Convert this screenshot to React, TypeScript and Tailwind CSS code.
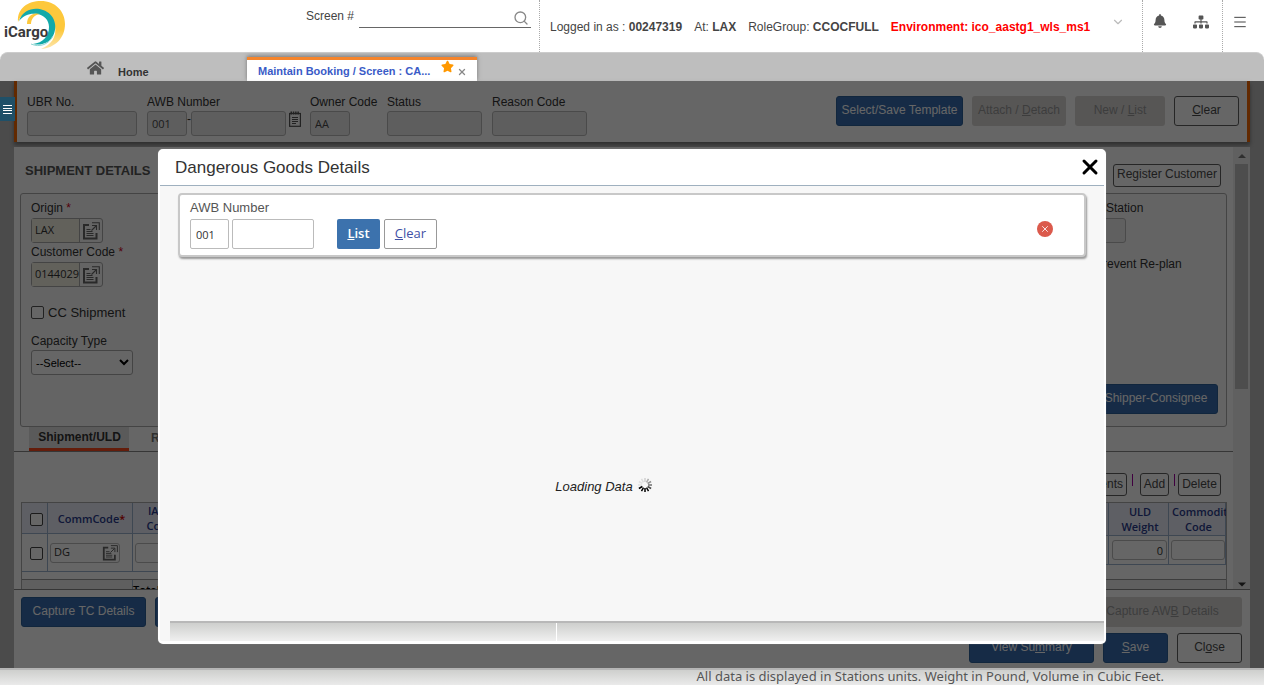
import React from "react";
import { FaBell, FaHome, FaSitemap, FaStar } from "react-icons/fa";
import { ChevronDown, Menu, Search, X } from "lucide-react";

const field = "block h-[25px] rounded-[3px] border border-[#bababa] px-1 font-['Open_Sans',sans-serif] text-[11px] text-[#4a4a4a]";
const outlined = "rounded-[3px] border border-[#606060] pb-[2px] text-xs text-[#4a4a4a]";
const primary = "h-[30px] rounded-[3px] border border-[#2c5f98] bg-[#376cae] pb-[2px] text-xs text-white";
const disabled = "h-[30px] rounded-[3px] bg-[#d9d7d5] pb-[2px] text-xs text-[#9a9a9a]";

function LookupIcon({ className }: { className: string }) {
  return (
    <svg viewBox="0 0 18 18" className={className} fill="none" stroke="#666" aria-hidden="true">
      <path d="M7 3H2v13.500h12.500V11" strokeWidth="2" />
      <path d="M4.500 7.500h4M4.500 9.500h6M4.500 11.500h7M4.500 13.500h7" strokeWidth="1" />
      <path d="M9.500 8.500 14 4M10 3.500h4.500V8M10 .7h7.300V8" strokeWidth="1.100" />
    </svg>
  );
}

function NotepadIcon() {
  return (
    <svg viewBox="0 0 12 16" className="h-4 w-3" fill="none" stroke="#555" aria-hidden="true">
      <rect x=".6" y="2.500" width="10.800" height="12.800" strokeWidth="1.200" />
      <path d="M1.500 2h9" strokeWidth="3" strokeDasharray="1.500 .8" />
      <path d="M3 6.500h6M3 8.500h6M3 10.500h6M3 12.500h4" />
    </svg>
  );
}

function Logo() {
  return (
    <svg viewBox="0 0 66 52" className="h-[52px] w-[66px]" role="img" aria-label="iCargo">
      <defs>
        <linearGradient id="sun" x1="0" y1="0" x2="0" y2="1">
          <stop offset=".6" stopColor="#fdc83c" />
          <stop offset="1" stopColor="#fde6ae" />
        </linearGradient>
      </defs>
      <path d="M18 22C17 8 28 1 41 1c14 0 24 10 24 23 0 14-10 24-24 25 10-4 16-12 14-23C53 14 40 8 28 12c-5 2-8 5-10 10Z" fill="url(#sun)" />
      <path d="M19 21C23 9 35 7 43 10c12 4 15 17 10 26-4 7-12 10-20 8 10-1 16-8 16-17 0-7-5-12-12-13-7-1-13 1-18 7Z" fill="#12a9a9" />
      <path d="M27 24c0-8 6-12 13-10-6 1-9 5-9 10Z" fill="#fdc83c" />
      <path d="M31 44c9 4 18 0 22-8" fill="none" stroke="#8fd6d3" strokeWidth="1" />
      <text x="4" y="37" fontFamily="Roboto, Liberation Sans, sans-serif" fontSize="15" fontWeight="700" fill="#39393b">iCargo</text>
    </svg>
  );
}

function TopBar() {
  return (
    <header className="flex h-[52px] bg-white text-xs text-[#444]">
      <div className="w-[306px] shrink-0"><Logo /></div>
      <div className="flex w-[234px] shrink-0 items-start gap-[5px] border-r border-dotted border-[#aaa] pt-2">
        <label htmlFor="screen" className="leading-4">Screen #</label>
        <div className="flex h-5 w-[172px] items-center border-b border-[#666]">
          <input id="screen" className="w-full min-w-0 outline-none" />
          <Search className="mr-[2px] h-4 w-4 shrink-0 text-[#888]" strokeWidth={2} />
        </div>
      </div>
      <div className="flex grow gap-3 whitespace-nowrap pt-[19px] pl-[10px] leading-4">
        <span>Logged in as : <b>00247319</b></span>
        <span>At: <b>LAX</b></span>
        <span>RoleGroup: <b>CCOCFULL</b></span>
        <b className="text-[#f00]">Environment: ico_aastg1_wls_ms1</b>
      </div>
      <button aria-label="More" className="mr-[17px] h-11 shrink-0"><ChevronDown className="h-[14px] w-[14px] text-[#bbb]" /></button>
      <div className="flex w-[81px] shrink-0 items-start justify-between border-x border-dotted border-[#aaa] pt-[14px] pr-[13px] pl-[10px]">
        <button aria-label="Notifications"><FaBell className="h-[14px] w-[14px] text-[#555]" /></button>
        <button aria-label="Site map"><FaSitemap className="h-4 w-4 text-[#555]" /></button>
      </div>
      <button aria-label="Menu" className="flex w-[41px] shrink-0 items-start justify-center pt-[14px] pr-2"><Menu className="h-4 w-4 text-[#444]" strokeWidth={1.5} /></button>
    </header>
  );
}

function TabBar() {
  return (
    <nav className="flex h-[29px] items-end rounded-t-lg border-t border-[#ccc] bg-[#bebebe] text-[11px] font-bold">
      <a href="#home" className="ml-[87px] flex h-[21px] w-[160px] items-start gap-[14px] text-[#333]">
        <FaHome className="h-4 w-[17px] text-[#555]" />
        <span className="pt-1 leading-4">Home</span>
      </a>
      <div className="flex h-[24px] w-[230px] justify-between border-t-[3px] border-[#f5842b] bg-white pr-[10px] pl-[11px] shadow-[0_-1px_4px_#777]">
        <a href="#booking" className="pt-[3px] leading-4 whitespace-nowrap text-[#3a5bc7]">Maintain Booking / Screen : CA...</a>
        <span className="flex items-start gap-[3px]">
          <FaStar className="h-[13px] w-[13px] shrink-0 text-[#ff9800]" />
          <button aria-label="Close tab" className="pt-[7px]"><X className="h-[10px] w-[10px] text-[#888]" strokeWidth={3} /></button>
        </span>
      </div>
    </nav>
  );
}

function Field({ id, label, width, value }: { id: string; label: string; width: string; value?: string }) {
  return (
    <div className={width}>
      <label htmlFor={id} className="mb-px block leading-4 whitespace-nowrap">{label}</label>
      <input id={id} defaultValue={value} className={field + " w-full bg-[#ececec]"} />
    </div>
  );
}

function FilterPanel() {
  return (
    <section className="mb-[5px] flex h-[61px] items-start border-x-[3px] border-[#f56600] bg-white pr-2 pl-[10px] shadow-[0_3px_4px_#777]">
      <div className="flex pt-[13px]">
        <Field id="ubr" label="UBR No." width="mr-[10px] w-[110px]" />
        <div className="mr-[3px]">
          <label htmlFor="awb" className="mb-px block leading-4">AWB Number</label>
          <div className="flex">
            <input id="awb" defaultValue="001" className={field + " w-10 bg-[#ececec]"} />
            <span className="w-1 leading-4">-</span>
            <input aria-label="AWB serial" className={field + " w-[95px] bg-[#ececec]"} />
          </div>
        </div>
        <div className="mr-[9px] w-3 pt-[17px]"><NotepadIcon /></div>
        <Field id="owner" label="Owner Code" width="mr-[37px] w-10" value="AA" />
        <Field id="status" label="Status" width="mr-[10px] w-[95px]" />
        <Field id="reason" label="Reason Code" width="w-[95px]" />
      </div>
      <div className="ml-auto flex gap-[9px] pt-[15px]">
        <button className={primary + " w-[127px]"}>Select/Save Template</button>
        <button className={disabled + " w-[94px]"}>Attach / <u>D</u>etach</button>
        <button className={disabled + " w-[90px]"}>New / <u>L</u>ist</button>
        <button className={outlined + " h-[30px] w-[65px]"}><u>C</u>lear</button>
      </div>
    </section>
  );
}

function Lookup({ id, label, value }: { id: string; label: string; value: string }) {
  return (
    <div>
      <label htmlFor={id} className="mb-[2px] block leading-4">{label} <span className="text-[#d00020]">*</span></label>
      <div className="flex h-[25px] w-[72px] rounded-[3px] border border-[#aaa]">
        <input id={id} defaultValue={value} className="w-[48px] border-r border-[#aaa] bg-[#f4f2e4] pl-[3px] font-['Open_Sans',sans-serif] text-[11px]" />
        <button aria-label={"Look up " + label} className="flex grow items-center justify-center"><LookupIcon className="h-[18px] w-[18px]" /></button>
      </div>
    </div>
  );
}

function ShipmentBox() {
  return (
    <div className="mr-[6px] ml-[6px] flex h-[234px] justify-between rounded-[3px] border border-[#aaa] bg-[#fafafa] pl-[10px]">
      <div className="pt-[6px]">
        <Lookup id="origin" label="Origin" value="LAX" />
        <div className="pt-px"><Lookup id="customer" label="Customer Code" value="0144029" /></div>
        <label className="mt-[17px] flex h-[17px] items-center gap-1 text-[13px]">
          <input type="checkbox" className="h-[13px] w-[13px] appearance-none rounded-[2px] border border-[#555] bg-white" />CC Shipment
        </label>
        <label htmlFor="capacity" className="mt-[12px] mb-px block leading-4">Capacity Type</label>
        <select id="capacity" className="h-[25px] w-[102px] rounded-[3px] border border-[#aaa] bg-white text-[11px] text-black">
          <option>--Select--</option>
        </select>
      </div>
      <div className="flex w-[166px] flex-col pt-[6px] pr-2">
        <label htmlFor="station" className="mb-[2px] pl-[46px] leading-4">Station</label>
        <input id="station" className={field + " w-[66px] bg-[#f0f0f0]"} />
        <span className="mt-[13px] pl-[35px] leading-4">Prevent Re-plan</span>
        <button className={primary + " mt-auto mb-3 w-full pl-[34px]"}>Shipper-Consignee</button>
      </div>
    </div>
  );
}

const head = "border-r border-[#9cb2cc] bg-[#eaedf9] p-0 pl-[3px] text-center leading-[15px] font-semibold text-[#283a8c]";
const tick = "mt-[5px] h-[13px] w-[13px] appearance-none rounded-[2px] border border-[#444] bg-white";
const cellInput = "block h-5 rounded-[3px] border border-[#bbb] px-1";

function Grid() {
  return (
    <div className="mr-[6px] ml-[7px] overflow-hidden border border-b-0 border-[#aaa] font-['Open_Sans',sans-serif] text-[11px]">
      <div className="flex h-[76px] justify-between">
        <table className="h-[69px] w-[290px] table-fixed border-separate border-spacing-0">
          <thead>
            <tr className="h-[31px]">
              <th className={head + " w-[26px] border-b"}><input aria-label="Select all" type="checkbox" className={tick} /></th>
              <th className={head + " w-[85px] border-b"}>CommCode<span className="text-[#c00]">*</span></th>
              <th className={head + " w-[52px] border-b"}>IATA<br />Code</th>
              <th className={head + " border-b"} />
            </tr>
          </thead>
          <tbody>
            <tr className="h-[38px]">
              <td className="border-r border-b border-[#9cb2cc] p-0 pl-[3px] text-center"><input aria-label="Select row" type="checkbox" className={tick} /></td>
              <td className="border-r border-b border-[#9cb2cc] p-0 pl-[2px]">
                <div className="flex h-5 w-[70px] items-center rounded-[3px] border border-[#bbb]">
                  <input aria-label="Commodity" defaultValue="DG" className="w-[51px] pl-[3px]" />
                  <LookupIcon className="h-4 w-4" />
                </div>
              </td>
              <td className="border-r border-b border-[#9cb2cc] p-0 pl-[2px]"><input aria-label="IATA code" className={cellInput + " w-[46px]"} /></td>
              <td className="border-b border-[#9cb2cc]" />
            </tr>
          </tbody>
        </table>
        <table className="h-[62px] w-[166px] table-fixed border-separate border-spacing-0">
          <thead>
            <tr className="h-[33px]">
              <th className={head + " w-[49px] border-b"} />
              <th className={head + " w-[60px] border-b"}>ULD<br />Weight</th>
              <th className={head + " border-b"}>Commodit<br />Code</th>
            </tr>
          </thead>
          <tbody>
            <tr className="h-[29px]">
              <td className="border-r border-b border-[#9cb2cc]" />
              <td className="border-r border-b border-[#9cb2cc] p-0 pl-[3px]"><input aria-label="ULD weight" defaultValue="0" className={cellInput + " w-[55px] px-[3px] text-right"} /></td>
              <td className="border-r border-b border-[#9cb2cc] p-0 pl-[2px]"><input aria-label="Commodity code" className={cellInput + " w-full"} /></td>
            </tr>
          </tbody>
        </table>
      </div>
      <div className="flex h-[10px] overflow-hidden border-t border-[#999] bg-[#eee]">
        <span className="ml-[110px] border-l border-[#9cb2cc] leading-[20px] font-semibold text-black">Total</span>
      </div>
    </div>
  );
}

function MainPanel() {
  return (
    <section className="flex border-b border-[#888] bg-white">
      <div className="min-w-0 grow">
        <div className="flex h-[46px] items-center justify-between pr-3 pl-[11px]">
          <h2 className="pt-px text-[13px] font-bold text-[#555]">SHIPMENT DETAILS</h2>
          <button className={outlined + " mt-[10px] h-[23px] w-[108px]"}>Register Customer</button>
        </div>
        <ShipmentBox />
        <div className="flex h-[25px] border-b border-[#888] pl-[15px] font-bold">
          <button className="h-6 w-[100px] border-b-[3px] border-[#fa4a1c] bg-[#e2e2e2] pb-[2px] pl-px">Shipment/ULD</button>
          <button className="ml-[22px] pb-[2px] text-[#777]">R</button>
        </div>
        <div className="flex h-[50px] items-end justify-end pr-3 pb-[6px]">
          <button className={outlined + " h-[23px] w-[60px] pr-[3px] text-right"}>ents</button>
          <span className="mb-[10px] ml-[5px] h-3 border-l border-[#a000a0]" />
          <button className={outlined + " ml-[7px] h-[23px] w-[29px]"}>Add</button>
          <span className="mb-[10px] ml-[5px] h-3 border-l border-[#a000a0]" />
          <button className={outlined + " ml-[3px] h-[23px] w-[43px]"}>Delete</button>
        </div>
        <Grid />
      </div>
      <div className="flex w-[17px] shrink-0 flex-col items-center bg-[#f1f1f1] text-[#777]">
        <svg viewBox="0 0 8 17" className="h-[17px] w-2" fill="currentColor" aria-hidden="true"><path d="M0 11 4 7l4 4Z" /></svg>
        <div className="h-[225px] w-[13px] bg-[#c1c1c1]" />
        <svg viewBox="0 0 8 17" className="mt-auto h-[17px] w-2" fill="#333" aria-hidden="true"><path d="M0 10.500l4 4 4-4Z" /></svg>
      </div>
    </section>
  );
}

function ActionPanel() {
  return (
    <section className="flex h-[78px] flex-col gap-[6px] bg-white px-2 pt-[7px] pl-[7px]">
      <div className="flex gap-[9px]">
        <button className={primary + " w-[125px]"}>Capture TC Details</button>
        <button aria-label="Capture" className={primary + " w-[125px]"} />
        <button className={disabled + " ml-auto w-[159px]"}>Capture AW<u>B</u> Details</button>
      </div>
      <div className="flex justify-end gap-[9px]">
        <button className={primary + " w-[125px]"}>View Su<u>m</u>mary</button>
        <button className={primary + " w-[65px]"}><u>S</u>ave</button>
        <button className={outlined + " h-[30px] w-[65px]"}>Cl<u>o</u>se</button>
      </div>
    </section>
  );
}

function GoodsDialog() {
  const input = "h-[30px] rounded-[2px] border border-[#bbb] bg-white px-[5px] font-['Open_Sans',sans-serif] text-[11px] text-[#333]";
  return (
    <div role="dialog" aria-labelledby="goods" className="absolute inset-x-[158px] top-[68px] flex h-[495px] flex-col rounded-[5px] border-2 border-b-[3px] border-white bg-[#f7f7f7] shadow-[0_0_1px_#999]">
      <div className="flex h-[35px] shrink-0 items-center justify-between border-b border-[#9fb0bf] bg-white pr-[2px] pl-[15px]">
        <h1 id="goods" className="text-[17px] text-[#333]">Dangerous Goods Details</h1>
        <button aria-label="Close dialog" className="pb-[2px]"><X className="h-6 w-6 text-black" strokeWidth={3} /></button>
      </div>
      <div className="mx-[18px] mt-[7px] flex h-[64px] items-center justify-between rounded-[4px] border-2 border-[#c8c8c8] bg-white pr-[31px] pb-px pl-[10px] shadow-[1px_2px_2px_#999]">
        <div>
          <label htmlFor="dg-awb" className="mb-[3px] block text-[13px] leading-4 text-[#555]">AWB Number</label>
          <div className="flex">
            <input id="dg-awb" defaultValue="001" className={input + " mr-[3px] w-[39px]"} />
            <input aria-label="AWB serial number" className={input + " mr-[23px] w-[82px]"} />
            <button className="mr-1 h-[30px] w-[43px] rounded-[2px] bg-[#3c72ad] font-['Open_Sans',sans-serif] text-[13px] font-semibold text-white"><u>L</u>ist</button>
            <button className="h-[30px] w-[53px] rounded-[2px] border border-[#999] bg-white font-['Open_Sans',sans-serif] text-[13px] text-[#3f51a5]"><u>C</u>lear</button>
          </div>
        </div>
        <button aria-label="Dismiss" className="mt-[9px] flex h-4 w-4 items-center justify-center rounded-full bg-[#db5a4c]"><X className="h-[10px] w-[10px] text-white" /></button>
      </div>
      <div className="flex grow items-center justify-center gap-1 pt-[95px] pr-[56px] text-[13px] text-[#222] italic">
        Loading Data
        <svg viewBox="0 0 16 16" className="mb-1 h-4 w-4" stroke="#000" strokeWidth="1.500" aria-hidden="true">
          <path d="m8 11 0 4" /><path d="m6.500 10.600-2 3.500" />
          <path d="m5.400 9.500-3.500 2" /><path d="m5 8-4 0" opacity=".08" />
          <path d="m5.400 6.500-3.500-2" opacity=".08" /><path d="m6.500 5.400-2-3.500" opacity=".1" />
          <path d="m8 5 0-4" opacity=".15" /><path d="m9.500 5.400 2-3.500" opacity=".3" />
          <path d="m10.600 6.500 3.500-2" opacity=".4" /><path d="m11 8 4 0" opacity=".55" />
          <path d="m10.600 9.500 3.500 2" opacity=".7" /><path d="m9.500 10.600 2 3.500" />
        </svg>
      </div>
      <div className="ml-[10px] flex h-5 shrink-0 border-t-2 border-[#b8b8b8] bg-linear-to-b from-[#cecfcd] to-[#f0f0f0]">
        <div className="w-[387px] border-r border-white" />
      </div>
    </div>
  );
}

export default function App() {
  return (
    <div className="min-h-screen bg-white font-['Liberation_Sans',Arial,sans-serif]">
      <TopBar />
      <TabBar />
      <main className="relative bg-[#bcbcbc] px-[14px] text-xs text-[#333]">
        <FilterPanel />
        <MainPanel />
        <ActionPanel />
        <div className="absolute inset-0 bg-black/60" />
        <button aria-label="Open side menu" className="absolute top-4 left-0 flex h-6 w-[15px] items-center justify-center bg-[#1f5068]">
          <svg viewBox="0 0 9 9" className="h-[9px] w-[9px]" stroke="#fff" strokeWidth="1" aria-hidden="true"><path d="M0 .5h9M0 3.500h9M0 5.500h9M0 8.500h9" /></svg>
        </button>
        <GoodsDialog />
      </main>
      <footer className="flex h-[17px] items-center justify-end border-t-2 border-[#b5b5b5] bg-linear-to-b from-[#cecfcd] to-[#eaeaea] pr-[100px] pb-[2px] font-['Noto_Sans',sans-serif] text-[13px] leading-[15px] whitespace-nowrap text-[#555]">
        All data is displayed in Stations units. Weight in Pound, Volume in Cubic Feet.
      </footer>
    </div>
  );
}
